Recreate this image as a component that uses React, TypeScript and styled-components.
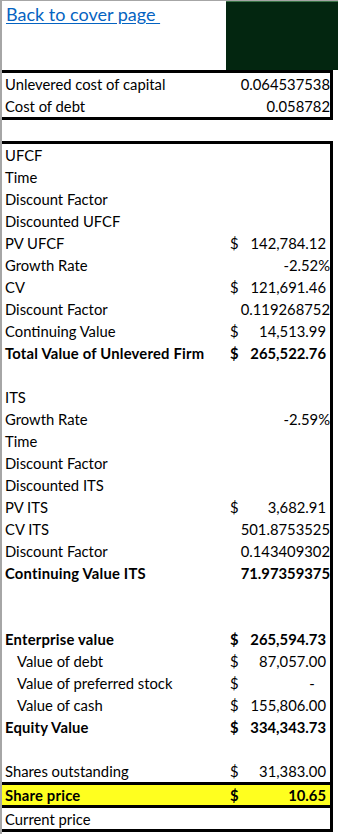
import styled, { createGlobalStyle } from 'styled-components';

type Row = {
  label?: string;
  value?: string;
  money?: string;
  bold?: boolean;
  indent?: boolean;
};

const GlobalStyle = createGlobalStyle`
  html, body {
    margin: 0;
    padding: 0;
    background: #ffffff;
  }
  body {
    font-family: Lato, 'Liberation Sans', sans-serif;
    color: #000000;
  }
`;

const StyledPage = styled.div`
  width: 338px;
  height: 834px;
  box-sizing: border-box;
  border-left: 2px solid #a6a6a6;
  border-top: 1px solid #a6a6a6;
  background: #ffffff;
  overflow: hidden;
`;

const StyledHeader = styled.div`
  display: flex;
  height: 69px;
`;

const StyledLinkCell = styled.div`
  flex: 1;
  padding: 2px 0 0 4px;
`;

const StyledLink = styled.a`
  font-size: 18px;
  color: #0563c1;
  text-decoration: underline;
  text-underline-offset: 2px;
  white-space: pre;
  cursor: pointer;
`;

const StyledLogo = styled.div`
  width: 112px;
  margin-top: -1px;
  background: #032610;
  border-top: 2px solid #3b7548;
`;

const StyledBox = styled.div<{ $gapTop?: number }>`
  width: 331px;
  box-sizing: border-box;
  margin-top: ${({ $gapTop }) => $gapTop ?? 0}px;
  border-top: 3px solid #000000;
  border-bottom: 3px solid #000000;
  border-right: 3px solid #000000;
`;

const StyledRow = styled.div<{ $height?: number }>`
  display: flex;
  align-items: center;
  justify-content: space-between;
  height: ${({ $height }) => $height ?? 22}px;
  font-size: 14.8px;
`;

const StyledHighlightRow = styled(StyledRow)`
  background: #ffff1f;
  border-top: 3px solid #000000;
  border-bottom: 3px solid #000000;
`;

const StyledLabel = styled.span<{ $bold?: boolean; $indent?: boolean }>`
  padding-left: ${({ $indent }) => ($indent ? '15px' : '3px')};
  font-weight: ${({ $bold }) => ($bold ? 700 : 400)};
  letter-spacing: ${({ $bold }) => ($bold ? '0.2px' : '0')};
  white-space: nowrap;
`;

const StyledPlain = styled.span<{ $bold?: boolean }>`
  padding-right: 0;
  font-weight: ${({ $bold }) => ($bold ? 700 : 400)};
`;

const StyledMoney = styled.span<{ $bold?: boolean }>`
  display: flex;
  justify-content: space-between;
  width: 96px;
  padding-right: 4px;
  white-space: pre;
  font-weight: ${({ $bold }) => ($bold ? 700 : 400)};
`;

const topRows: Row[] = [
  { label: 'Unlevered cost of capital', value: '0.064537538' },
  { label: 'Cost of debt', value: '0.058782' },
];

const mainRows: Row[] = [
  { label: 'UFCF' },
  { label: 'Time' },
  { label: 'Discount Factor' },
  { label: 'Discounted UFCF' },
  { label: 'PV UFCF', money: '142,784.12' },
  { label: 'Growth Rate', value: '-2.52%' },
  { label: 'CV', money: '121,691.46' },
  { label: 'Discount Factor', value: '0.119268752' },
  { label: 'Continuing Value', money: '14,513.99' },
  { label: 'Total Value of Unlevered Firm', money: '265,522.76', bold: true },
  {},
  { label: 'ITS' },
  { label: 'Growth Rate', value: '-2.59%' },
  { label: 'Time' },
  { label: 'Discount Factor' },
  { label: 'Discounted ITS' },
  { label: 'PV ITS', money: '3,682.91' },
  { label: 'CV ITS', value: '501.8753525' },
  { label: 'Discount Factor', value: '0.143409302' },
  { label: 'Continuing Value ITS', value: '71.97359375', bold: true },
  {},
  {},
  { label: 'Enterprise value', money: '265,594.73', bold: true },
  { label: 'Value of debt', money: '87,057.00', indent: true },
  { label: 'Value of preferred stock', money: '-   ', indent: true },
  { label: 'Value of cash', money: '155,806.00', indent: true },
  { label: 'Equity Value', money: '334,343.73', bold: true },
  {},
  { label: 'Shares outstanding', money: '31,383.00' },
];

const renderValue = ({ value, money, bold }: Row) => {
  if (money) {
    return (
      <StyledMoney $bold={bold}>
        <span>$</span>
        <span>{money}</span>
      </StyledMoney>
    );
  }
  if (value) return <StyledPlain $bold={bold}>{value}</StyledPlain>;
  return null;
};

const SheetRow = (row: Row) => (
  <StyledRow>
    <StyledLabel $bold={row.bold} $indent={row.indent}>
      {row.label}
    </StyledLabel>
    {renderValue(row)}
  </StyledRow>
);

export default function App() {
  return (
    <StyledPage>
      <GlobalStyle />
      <StyledHeader>
        <StyledLinkCell>
          <StyledLink>Back to cover page </StyledLink>
        </StyledLinkCell>
        <StyledLogo />
      </StyledHeader>
      <StyledBox>
        {topRows.map((row, index) => (
          <SheetRow key={index} {...row} />
        ))}
      </StyledBox>
      <StyledBox $gapTop={21}>
        {mainRows.map((row, index) => (
          <SheetRow key={index} {...row} />
        ))}
        <StyledHighlightRow $height={20}>
          <StyledLabel $bold>Share price</StyledLabel>
          <StyledMoney $bold>
            <span>$</span>
            <span>10.65</span>
          </StyledMoney>
        </StyledHighlightRow>
        <StyledRow $height={21}>
          <StyledLabel>Current price</StyledLabel>
        </StyledRow>
      </StyledBox>
    </StyledPage>
  );
}
